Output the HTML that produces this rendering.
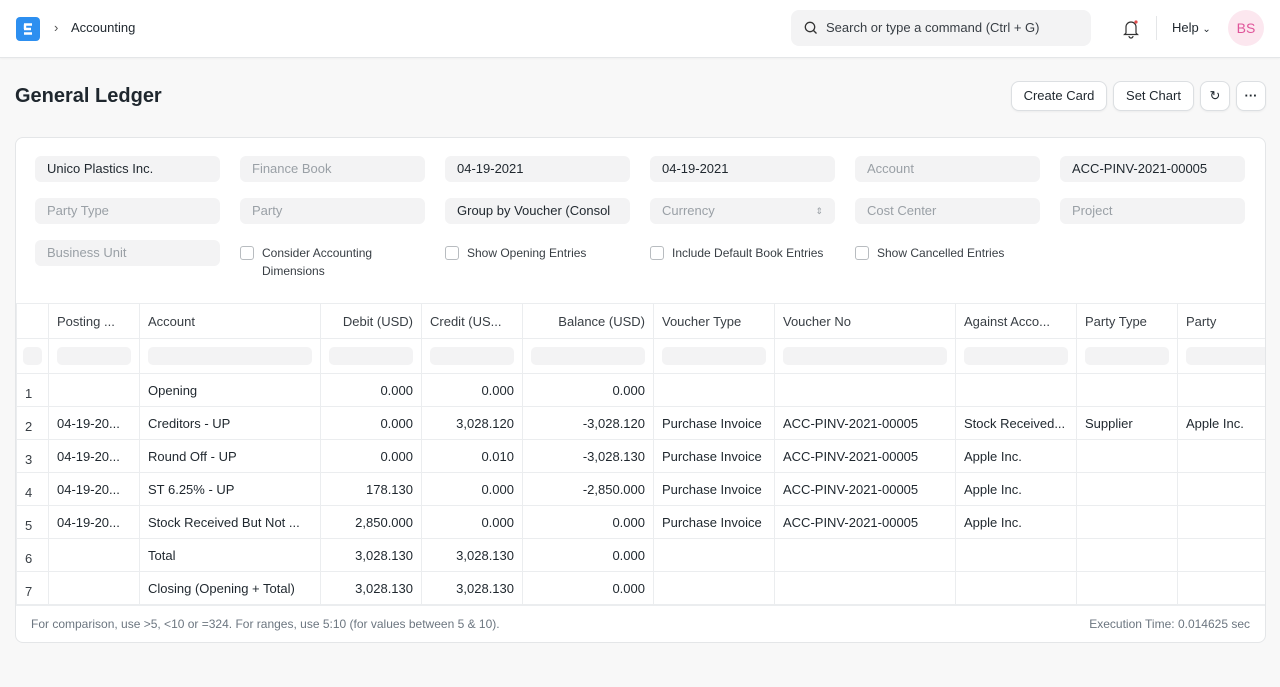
<!DOCTYPE html>
<html><head><meta charset="utf-8"><style>
*{box-sizing:border-box;margin:0;padding:0}
body{width:1280px;height:687px;background:#f8f8f8;font-family:"Liberation Sans",sans-serif;color:#1f272e;font-size:13px;position:relative;overflow:hidden}
.nav{position:absolute;left:0;top:0;width:1280px;height:58px;background:#fff;border-bottom:1px solid #e4e6e8;box-shadow:0 1px 2px rgba(0,0,0,.04)}
.abs{position:absolute}
.logo{left:16px;top:17px;width:24px;height:24px;background:#2d8ff0;border-radius:4px}
.search{left:791px;top:10px;width:300px;height:36px;background:#f3f3f4;border-radius:8px;color:#383e44;font-size:13px;line-height:36px;padding-left:35px}
.btn{top:81px;height:30px;background:#fff;border:1px solid #dcdfe2;border-radius:8px;font-size:13px;line-height:28px;text-align:center;box-shadow:0 1px 2px rgba(0,0,0,.05)}
.card{left:15px;top:137px;width:1251px;height:506px;background:#fff;border:1px solid #e4e6e8;border-radius:8px;overflow:hidden}
.f{position:absolute;width:185px;height:26px;background:#f3f3f4;border-radius:6px;padding-left:12px;line-height:26px;font-size:13px;color:#9aa0a6}
.f.v{color:#1f272e}
.cb{position:absolute;font-size:12px;color:#383e44;padding-left:22px;line-height:18px}
.cb:before{content:"";position:absolute;left:0;top:2px;width:12px;height:12px;border:1px solid #b8bcc0;border-radius:3px;background:#fff}
table{position:absolute;left:0;top:165px;width:1271px;border-collapse:collapse;table-layout:fixed;font-size:13px}
td{border:1px solid #ebedef;height:33px;padding:0 8px;white-space:nowrap;overflow:hidden;text-overflow:ellipsis;color:#1f272e}
tr.h td{height:35px;color:#383e44}
tr.fl td{height:35px}
.r{text-align:right}
.ph{height:18px;background:#f3f3f4;border-radius:5px}
.num{color:#383e44;padding-top:6px}
</style></head><body>
<div class="nav">
 <div class="abs logo"><svg width="24" height="24" viewBox="0 0 24 24"><path d="M8 7.5h8M8 12h7M8 16.5h8M9 7.5v4.5" stroke="#fff" stroke-width="2.4" fill="none"/></svg></div>
 <div class="abs" style="left:54px;top:20px;font-size:13px;color:#525252">›</div>
 <div class="abs" style="left:71px;top:20px;font-size:13px;color:#1f272e">Accounting</div>
 <div class="abs search"><svg class="abs" style="left:13px;top:11px" width="14" height="14" viewBox="0 0 14 14"><circle cx="6" cy="6" r="4.7" stroke="#333" stroke-width="1.3" fill="none"/><path d="M9.5 9.5l3 3" stroke="#333" stroke-width="1.3"/></svg>Search or type a command (Ctrl + G)</div>
 <svg class="abs" style="left:1122px;top:19px" width="18" height="20" viewBox="0 0 18 20"><path d="M4 14V8a5 5 0 0 1 10 0v6l1.5 1.5h-13z M7 17a2 2 0 0 0 4 0" stroke="#333" stroke-width="1.2" fill="none"/><circle cx="14" cy="3" r="1.6" fill="#e24c4c"/></svg>
 <div class="abs" style="left:1156px;top:16px;width:1px;height:24px;background:#e4e6e8"></div>
 <div class="abs" style="left:1172px;top:20px;font-size:13px">Help <span style="font-size:10px">⌄</span></div>
 <div class="abs" style="left:1228px;top:10px;width:36px;height:36px;border-radius:50%;background:#fce7ef;color:#e0559a;text-align:center;line-height:36px;font-size:14px">BS</div>
</div>
<div class="abs" style="left:15px;top:85px;font-size:20px;font-weight:bold">General Ledger</div>
<div class="abs btn" style="left:1011px;width:96px">Create Card</div>
<div class="abs btn" style="left:1113px;width:81px">Set Chart</div>
<div class="abs btn" style="left:1200px;width:30px">↻</div>
<div class="abs btn" style="left:1236px;width:30px;font-weight:bold">···</div>
<div class="abs card">
 <div class="f v" style="left:19px;top:18px">Unico Plastics Inc.</div>
 <div class="f" style="left:224px;top:18px">Finance Book</div>
 <div class="f v" style="left:429px;top:18px">04-19-2021</div>
 <div class="f v" style="left:634px;top:18px">04-19-2021</div>
 <div class="f" style="left:839px;top:18px">Account</div>
 <div class="f v" style="left:1044px;top:18px">ACC-PINV-2021-00005</div>
 <div class="f" style="left:19px;top:60px">Party Type</div>
 <div class="f" style="left:224px;top:60px">Party</div>
 <div class="f v" style="left:429px;top:60px;overflow:hidden;white-space:nowrap">Group by Voucher (Consol</div>
 <div class="f" style="left:634px;top:60px">Currency<span style="position:absolute;right:12px;font-size:9px">⇕</span></div>
 <div class="f" style="left:839px;top:60px">Cost Center</div>
 <div class="f" style="left:1044px;top:60px">Project</div>
 <div class="f" style="left:19px;top:102px">Business Unit</div>
 <div class="cb" style="left:224px;top:106px">Consider Accounting<br>Dimensions</div>
 <div class="cb" style="left:429px;top:106px">Show Opening Entries</div>
 <div class="cb" style="left:634px;top:106px">Include Default Book Entries</div>
 <div class="cb" style="left:839px;top:106px">Show Cancelled Entries</div>
 <table>
 <colgroup><col style="width:32px"><col style="width:91px"><col style="width:181px"><col style="width:101px"><col style="width:101px"><col style="width:131px"><col style="width:121px"><col style="width:181px"><col style="width:121px"><col style="width:101px"><col style="width:110px"></colgroup>
 <tr class="h"><td></td><td>Posting ...</td><td>Account</td><td class="r">Debit (USD)</td><td>Credit (US...</td><td class="r">Balance (USD)</td><td>Voucher Type</td><td>Voucher No</td><td>Against Acco...</td><td>Party Type</td><td>Party</td></tr>
 <tr class="fl"><td style="padding:0 6px"><div class="ph"></div></td><td><div class="ph"></div></td><td><div class="ph"></div></td><td><div class="ph"></div></td><td><div class="ph"></div></td><td><div class="ph"></div></td><td><div class="ph"></div></td><td><div class="ph"></div></td><td><div class="ph"></div></td><td><div class="ph"></div></td><td><div class="ph"></div></td></tr>
 <tr><td class="num">1</td><td></td><td>Opening</td><td class="r">0.000</td><td class="r">0.000</td><td class="r">0.000</td><td></td><td></td><td></td><td></td><td></td></tr>
 <tr><td class="num">2</td><td>04-19-20...</td><td>Creditors - UP</td><td class="r">0.000</td><td class="r">3,028.120</td><td class="r">-3,028.120</td><td>Purchase Invoice</td><td>ACC-PINV-2021-00005</td><td>Stock Received...</td><td>Supplier</td><td>Apple Inc.</td></tr>
 <tr><td class="num">3</td><td>04-19-20...</td><td>Round Off - UP</td><td class="r">0.000</td><td class="r">0.010</td><td class="r">-3,028.130</td><td>Purchase Invoice</td><td>ACC-PINV-2021-00005</td><td>Apple Inc.</td><td></td><td></td></tr>
 <tr><td class="num">4</td><td>04-19-20...</td><td>ST 6.25% - UP</td><td class="r">178.130</td><td class="r">0.000</td><td class="r">-2,850.000</td><td>Purchase Invoice</td><td>ACC-PINV-2021-00005</td><td>Apple Inc.</td><td></td><td></td></tr>
 <tr><td class="num">5</td><td>04-19-20...</td><td>Stock Received But Not ...</td><td class="r">2,850.000</td><td class="r">0.000</td><td class="r">0.000</td><td>Purchase Invoice</td><td>ACC-PINV-2021-00005</td><td>Apple Inc.</td><td></td><td></td></tr>
 <tr><td class="num">6</td><td></td><td>Total</td><td class="r">3,028.130</td><td class="r">3,028.130</td><td class="r">0.000</td><td></td><td></td><td></td><td></td><td></td></tr>
 <tr><td class="num">7</td><td></td><td>Closing (Opening + Total)</td><td class="r">3,028.130</td><td class="r">3,028.130</td><td class="r">0.000</td><td></td><td></td><td></td><td></td><td></td></tr>
 </table>
 <div class="abs" style="left:0;top:467px;width:1251px;border-top:1px solid #ebedef"></div>
 <div class="abs" style="left:15px;top:479px;font-size:12px;color:#6c7680">For comparison, use &gt;5, &lt;10 or =324. For ranges, use 5:10 (for values between 5 &amp; 10).</div>
 <div class="abs" style="right:15px;top:479px;font-size:12px;color:#6c7680">Execution Time: 0.014625 sec</div>
</div>
</body></html>
